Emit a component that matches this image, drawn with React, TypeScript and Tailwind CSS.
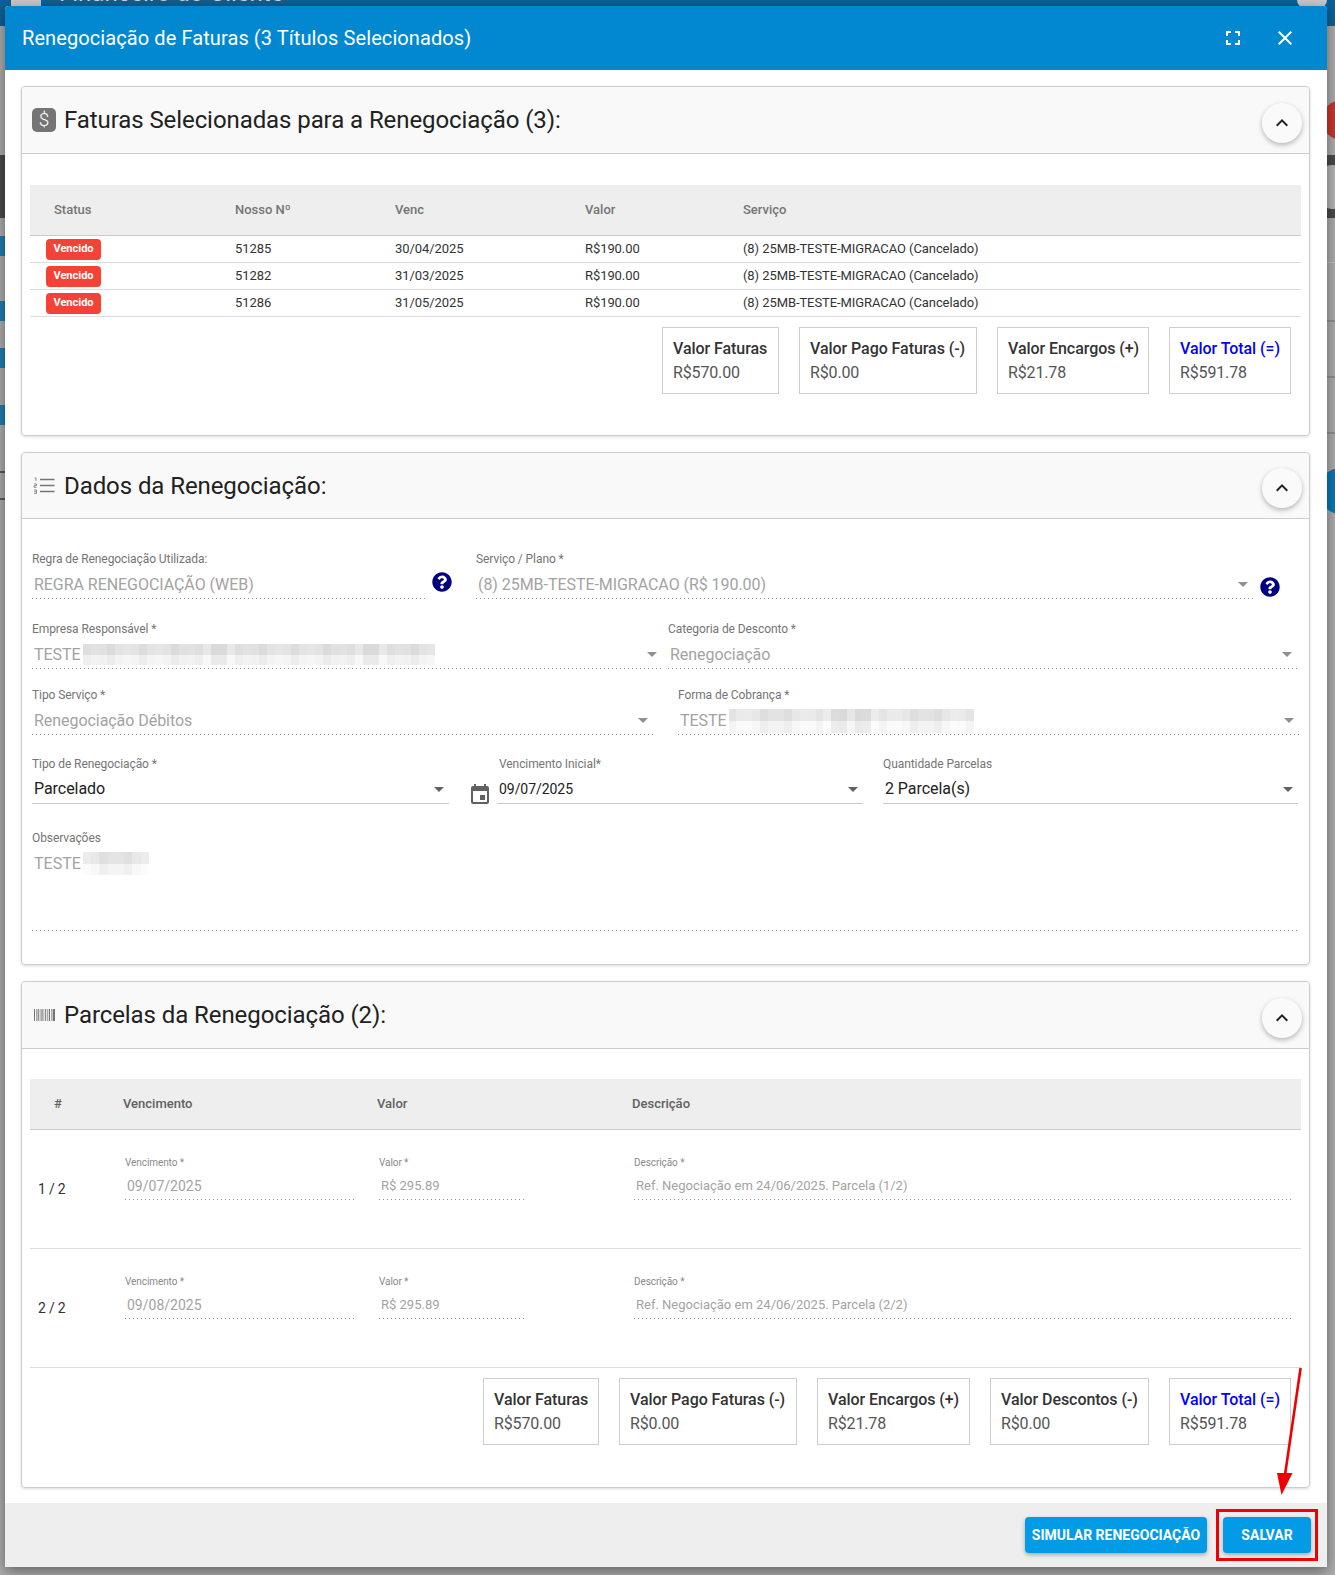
import { ReactNode } from "react";
import { FaQuestionCircle } from "react-icons/fa";
import { MdClose, MdEvent, MdExpandLess, MdFullscreen } from "react-icons/md";

const faturas = [
  { nosso: "51285", venc: "30/04/2025" },
  { nosso: "51282", venc: "31/03/2025" },
  { nosso: "51286", venc: "31/05/2025" },
];

const parcelas = [
  { n: "1 / 2", venc: "09/07/2025", desc: "Ref. Negociação em 24/06/2025. Parcela (1/2)" },
  { n: "2 / 2", venc: "09/08/2025", desc: "Ref. Negociação em 24/06/2025. Parcela (2/2)" },
];

// same dotted underline as a disabled material input
const dottedLine =
  "bg-[linear-gradient(to_right,rgba(0,0,0,0.42)_33%,transparent_0)] bg-[length:4px_1px] bg-[position:0_100%] bg-repeat-x";

function Caret({ dark }: { dark?: boolean }) {
  return (
    <svg width="10" height="5" viewBox="0 0 10 5" className="absolute right-[5px] top-[15px]">
      <path d="M0 0h10L5 5z" fill={dark ? "#616161" : "#8f8f8f"} />
    </svg>
  );
}

// pixelated patch that hides company names in the screenshot
function Blur({ cols, seed, h, w }: { cols: number; seed: number; h: number; w: number }) {
  const cells = Array.from({ length: cols }, (_, i) => i);
  return (
    <span className="ml-[2px] inline-flex flex-col" style={{ height: h, width: w }}>
      {[0, 1].map((row) => (
        <span key={row} className="flex flex-1">
          {cells.map((i) => {
            const v = (row === 0 ? 218 : 234) + (((i + 3) * (i + seed) * 7) % 19);
            return <span key={i} className="flex-1" style={{ background: `rgb(${v},${v},${v})` }} />;
          })}
        </span>
      ))}
    </span>
  );
}

function Field({
  label,
  value,
  className,
  line = "dotted",
  select,
  dark,
  small,
}: {
  label: string;
  value: ReactNode;
  className: string;
  line?: "dotted" | "solid";
  select?: boolean;
  dark?: boolean;
  small?: boolean;
}) {
  return (
    <div className={`shrink-0 ${className}`}>
      <div className="h-[16px] text-[12px] leading-[16px] tracking-[-0.08px] text-[#757575]">{label}</div>
      <div
        className={`relative flex h-[32px] items-center pl-[2px] pt-[3px] tracking-[-0.05px] ${small ? "text-[14px]" : "text-[16px]"} ${
          dark ? "text-[#212121]" : "text-[#a3a3a3]"
        } ${line === "dotted" ? dottedLine : "border-b border-solid border-[#c8c8c8]"}`}
      >
        {value}
        {select && <Caret dark={dark} />}
      </div>
    </div>
  );
}

function SmallField({ label, value, className, size }: { label: string; value: string; className: string; size: string }) {
  return (
    <div className={`ml-[2px] shrink-0 ${className}`}>
      <div className="h-[14px] text-[10px] leading-[14px] tracking-[-0.08px] text-[#8a8a8a]">{label}</div>
      <div className={`flex h-[30px] items-center pl-[2px] pt-[2px] text-[#a3a3a3] ${dottedLine} ${size}`}>{value}</div>
    </div>
  );
}

function Totals({ items }: { items: { label: string; value: string; w: string; total?: boolean }[] }) {
  return (
    <div className="mt-[10px] flex justify-end gap-[20px] pr-[10px]">
      {items.map((it) => (
        <div key={it.label} className={`h-[67px] border border-[#cfcfcf] px-[10px] pt-[9px] text-[16px] leading-[23px] ${it.w}`}>
          <div className={`whitespace-nowrap font-medium tracking-[-0.06px] ${it.total ? "text-[#0000ff]" : "text-[#333333]"}`}>
            {it.label}
          </div>
          <div className="mt-px tracking-[-0.15px] text-[#555555]">{it.value}</div>
        </div>
      ))}
    </div>
  );
}

function Card({
  title,
  icon,
  children,
  className,
  headerH = "h-[67px]",
}: {
  title: string;
  icon: ReactNode;
  children: ReactNode;
  className?: string;
  headerH?: string;
}) {
  return (
    <section className={`w-[1289px] rounded-[4px] border border-[#cccccc] shadow-[0_1px_3px_rgba(0,0,0,0.15)] ${className ?? ""}`}>
      <header className={`flex items-center rounded-t-[4px] border-b border-[#cccccc] bg-[#f9f9f9] pl-[10px] pr-[7px] ${headerH}`}>
        <div className="flex w-[24px] justify-center">{icon}</div>
        <h2 className="ml-[8px] text-[24px] leading-none tracking-[-0.08px] text-[#212121]">{title}</h2>
        <button className="ml-auto mt-[5px] flex h-[40px] w-[40px] items-center justify-center rounded-full bg-[#fafafa] text-[#212121] shadow-[0_2px_5px_rgba(0,0,0,0.28)]">
          <MdExpandLess size={24} />
        </button>
      </header>
      {children}
    </section>
  );
}

function Backdrop() {
  return (
    <>
      <div className="absolute inset-x-0 top-0 h-[26px] bg-[#0d6196]" />
      <div className="absolute left-[11px] top-0 h-[6px] w-[30px] bg-[#c9c9c9]" />
      <div className="absolute left-[59px] top-[-21px] text-[24px] leading-[28px] text-[#cfd8dc]">Financeiro do Cliente</div>
      <div className="absolute right-[8px] top-0 h-[8px] w-[30px] rounded-b-full bg-[#c9c9c9]" />
      <div className="absolute left-0 top-[155px] h-[63px] w-full bg-[#4a4a4a]" />
      <div className="absolute left-[1322px] top-[100px] h-[40px] w-[44px] rounded-full bg-[#c9372c]" />
      <div className="absolute left-[1318px] top-[468px] h-[46px] w-[46px] rounded-full bg-[#0b7ab5]" />
      <div className="absolute right-[-12px] top-[165px] h-[44px] w-[30px] rounded-full bg-[#b5b5b5]" />
      <div className="absolute left-0 top-[236px] h-[20px] w-[5px] bg-[#1f7fae]" />
      <div className="absolute left-0 top-[301px] h-[20px] w-[5px] bg-[#1f7fae]" />
      <div className="absolute left-0 top-[348px] h-[20px] w-[5px] bg-[#1f7fae]" />
      <div className="absolute left-0 top-[405px] h-[20px] w-[5px] bg-[#1f7fae]" />
      <div className="absolute left-0 top-[471px] h-[2px] w-[5px] bg-[#5c5c5c]" />
      <div className="absolute left-0 top-[498px] h-[2px] w-[5px] bg-[#5c5c5c]" />
      <div className="absolute right-0 top-[262px] h-px w-[8px] bg-[#c4c4c4]" />
      <div className="absolute right-0 top-[320px] h-[2px] w-[8px] bg-[#8f8f8f]" />
      <div className="absolute right-0 top-[376px] h-[2px] w-[8px] bg-[#8f8f8f]" />
      <div className="absolute right-0 top-[432px] h-[2px] w-[8px] bg-[#8f8f8f]" />
    </>
  );
}

export default function App() {
  return (
    <div className="relative h-[1575px] w-[1335px] overflow-hidden bg-[#adadad] [font-family:Roboto,sans-serif]">
      <Backdrop />

      <div className="relative ml-[5px] mt-[6px] w-[1322px] rounded-t-[4px] bg-white shadow-[0_4px_14px_rgba(0,0,0,0.45)]">
        {/* Header */}
        <div className="flex h-[64px] items-center rounded-t-[4px] bg-[#0288d1] pl-[17px] pr-[30px] text-white">
          <h1 className="text-[20px] leading-none tracking-[0.09px]">Renegociação de Faturas (3 Títulos Selecionados)</h1>
          <MdFullscreen size={24} className="ml-auto" />
          <MdClose size={24} className="ml-[28px]" />
        </div>

        <div className="pl-[16px] pt-[16px]">
          {/* Faturas */}
          <Card
            title="Faturas Selecionadas para a Renegociação (3):"
            icon={
              <div className="flex h-[24px] w-[24px] items-center justify-center rounded-[5px] bg-[#757575] text-[19px] font-light text-white">
                $
              </div>
            }
          >
            <div className="mx-[8px] mb-[41px] mt-[31px] w-[1271px]">
              <div className="flex h-[51px] items-center border-b border-[#cccccc] bg-[#eeeeee] text-[13px] font-medium text-[#757575]">
                <div className="w-[205px] pl-[24px]">Status</div>
                <div className="w-[160px]">Nosso Nº</div>
                <div className="w-[190px]">Venc</div>
                <div className="w-[158px]">Valor</div>
                <div>Serviço</div>
              </div>
              {faturas.map((f) => (
                <div key={f.nosso} className="flex h-[27px] items-center border-b border-[#dddddd] text-[13px] tracking-[-0.08px] text-[#333333]">
                  <div className="w-[205px] pl-[16px]">
                    <span className="flex h-[21px] w-[55px] items-center justify-center rounded-[4px] bg-[#f44336] pt-px text-[11px] font-bold tracking-normal text-white">
                      Vencido
                    </span>
                  </div>
                  <div className="w-[160px]">{f.nosso}</div>
                  <div className="w-[190px]">{f.venc}</div>
                  <div className="w-[158px]">R$190.00</div>
                  <div>(8) 25MB-TESTE-MIGRACAO (Cancelado)</div>
                </div>
              ))}
              <Totals
                items={[
                  { label: "Valor Faturas", value: "R$570.00", w: "w-[117px]" },
                  { label: "Valor Pago Faturas (-)", value: "R$0.00", w: "w-[178px]" },
                  { label: "Valor Encargos (+)", value: "R$21.78", w: "w-[152px]" },
                  { label: "Valor Total (=)", value: "R$591.78", w: "w-[122px]", total: true },
                ]}
              />
            </div>
          </Card>

          {/* Dados */}
          <Card
            className="mt-[16px]"
            headerH="h-[66px]"
            title="Dados da Renegociação:"
            icon={
              <svg width="22" height="17" viewBox="0 0 22 17" fill="none">
                <g stroke="#757575" strokeWidth="1.4">
                  <path d="M7 2.5h14.5M7 8.5h14.5M7 14.5h14.5" />
                  <path d="M1.5 1h1.5v3M1 7h2.5v1.7H1v1.6h2.5M1 13h2.5v3.4H1M1.2 14.7h2" strokeWidth="0.8" />
                </g>
              </svg>
            }
          >
            <div className="pb-[33px] pl-[10px] pt-[32px]">
              <div className="flex items-start">
                <Field className="w-[393px]" label="Regra de Renegociação Utilizada:" value="REGRA RENEGOCIAÇÃO (WEB)" />
                <FaQuestionCircle size={20} className="ml-[7px] mt-[21px] shrink-0 text-[#000080]" />
                <Field className="ml-[24px] w-[777px]" label="Serviço / Plano *" value="(8) 25MB-TESTE-MIGRACAO (R$ 190.00)" select />
                <FaQuestionCircle size={20} className="ml-[7px] mt-[26px] shrink-0 text-[#000080]" />
              </div>
              <div className="mt-[22px] flex">
                <Field
                  className="w-[630px]"
                  label="Empresa Responsável *"
                  value={<>TESTE<Blur cols={44} seed={2} h={21} w={353} /></>}
                  select
                />
                <Field className="ml-[6px] w-[629px]" label="Categoria de Desconto *" value="Renegociação" select />
              </div>
              <div className="mt-[18px] flex">
                <Field className="w-[621px]" label="Tipo Serviço *" value="Renegociação Débitos" select />
                <Field
                  className="ml-[25px] w-[621px]"
                  label="Forma de Cobrança *"
                  value={<>TESTE<Blur cols={31} seed={5} h={24} w={245} /></>}
                  select
                />
              </div>
              <div className="mt-[21px] flex items-start">
                <Field className="w-[417px]" label="Tipo de Renegociação *" value="Parcelado" line="solid" select dark />
                <MdEvent size={24} className="ml-[19px] mt-[27px] shrink-0 text-[#616161]" />
                <Field
                  className="ml-[5px] w-[366px] [&>div:first-child]:pl-[2px]"
                  label="Vencimento Inicial*"
                  value="09/07/2025"
                  line="solid"
                  select
                  dark
                  small
                />
                <Field className="ml-[20px] w-[415px]" label="Quantidade Parcelas" value="2 Parcela(s)" line="solid" select dark />
              </div>
              <div className="mt-[23px] w-[1266px]">
                <div className="h-[16px] text-[12px] leading-[16px] tracking-[-0.08px] text-[#757575]">Observações</div>
                <div className={`flex h-[85px] items-start pl-[2px] pt-[6px] text-[16px] text-[#a3a3a3] ${dottedLine}`}>
                  TESTE<Blur cols={8} seed={9} h={23} w={66} />
                </div>
              </div>
            </div>
          </Card>

          {/* Parcelas */}
          <Card
            className="mt-[16px]"
            title="Parcelas da Renegociação (2):"
            icon={
              <svg width="21" height="12" viewBox="0 0 21 12" fill="#757575">
                <path d="M0 0h1v12H0zM2 0h.6v12H2zM3.6 0h1.2v12H3.6zM5.8 0h.6v12h-.6zM7.4 0h1.2v12H7.4zM9.6 0h.6v12h-.6zM11.2 0h1v12h-1zM13.2 0h.6v12h-.6zM14.8 0h1.2v12h-1.2zM17 0h.6v12H17zM18.6 0H21v12h-2.4z" />
              </svg>
            }
          >
            <div className="mx-[8px] mb-[42px] mt-[30px] w-[1271px]">
              <div className="flex h-[51px] items-center border-b border-[#cccccc] bg-[#eeeeee] text-[13px] font-medium text-[#616161]">
                <div className="w-[93px] pl-[24px]">#</div>
                <div className="w-[254px]">Vencimento</div>
                <div className="w-[255px]">Valor</div>
                <div>Descrição</div>
              </div>
              {parcelas.map((p) => (
                <div key={p.n} className="flex h-[119px] border-b border-[#dddddd]">
                  <div className="flex w-[93px] items-center pl-[8px] text-[14px] tracking-[-0.2px] text-[#333333]">{p.n}</div>
                  <div className="flex pt-[26px]">
                    <div className="w-[254px]">
                      <SmallField className="w-[230px]" label="Vencimento *" value={p.venc} size="text-[14px]" />
                    </div>
                    <div className="w-[255px]">
                      <SmallField className="w-[145px]" label="Valor *" value="R$ 295.89" size="text-[13px]" />
                    </div>
                    <SmallField className="w-[657px]" label="Descrição *" value={p.desc} size="text-[13px]" />
                  </div>
                </div>
              ))}
              <Totals
                items={[
                  { label: "Valor Faturas", value: "R$570.00", w: "w-[116px]" },
                  { label: "Valor Pago Faturas (-)", value: "R$0.00", w: "w-[178px]" },
                  { label: "Valor Encargos (+)", value: "R$21.78", w: "w-[153px]" },
                  { label: "Valor Descontos (-)", value: "R$0.00", w: "w-[159px]" },
                  { label: "Valor Total (=)", value: "R$591.78", w: "w-[122px]", total: true },
                ]}
              />
            </div>
          </Card>
        </div>

        {/* Footer */}
        <div className="mt-[15px] flex h-[64px] items-center justify-end gap-[16px] bg-[#eeeeee] pr-[16px]">
          <button className="h-[36px] w-[182px] rounded-[4px] bg-[#039be5] text-[14px] font-bold text-white shadow-[0_2px_4px_rgba(0,0,0,0.3)]">
            SIMULAR RENEGOCIAÇÃO
          </button>
          <div className="relative">
            <button className="h-[36px] w-[88px] rounded-[4px] bg-[#039be5] text-[14px] font-bold text-white shadow-[0_2px_4px_rgba(0,0,0,0.3)]">
              SALVAR
            </button>
            <div className="absolute -inset-x-[7px] -inset-y-[8px] border-[3px] border-[#f00000]" />
          </div>
        </div>
      </div>

      {/* annotation arrow */}
      <svg className="absolute left-[1270px] top-[1360px]" width="40" height="140" viewBox="0 0 40 140">
        <path d="M30.6 8L15 115" stroke="#f00000" strokeWidth="2.6" fill="none" />
        <path d="M7 113L22.5 113L11.5 135z" fill="#f00000" />
      </svg>
    </div>
  );
}
